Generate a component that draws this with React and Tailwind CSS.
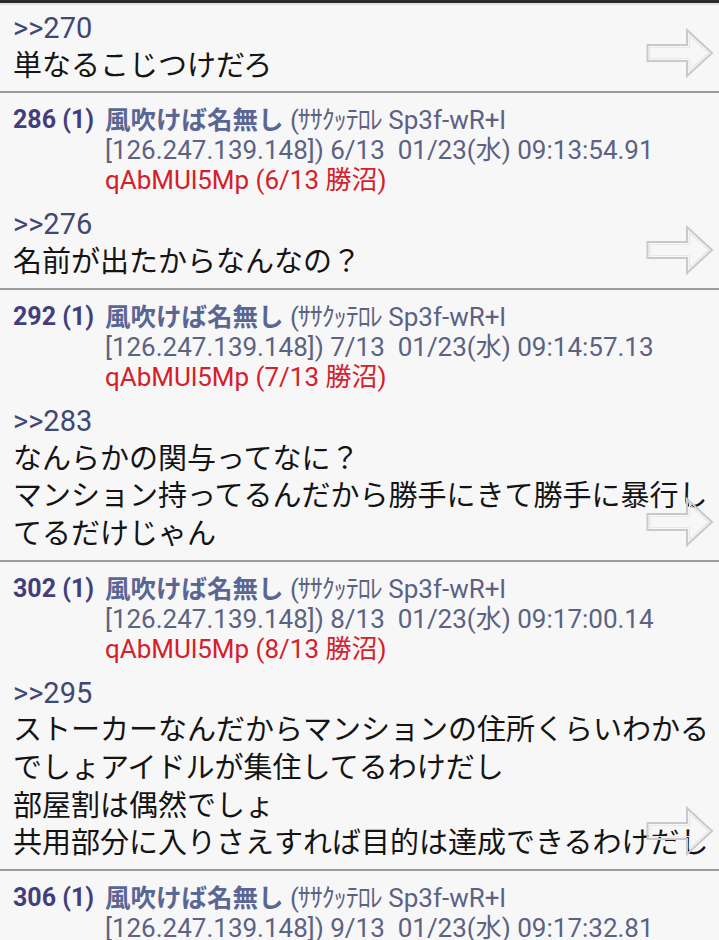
import React from 'react';

const posts = [
  {
    id: 286,
    date: '6/13  01/23(水) 09:13:54.91',
    count: '6/13',
    anchor: '>>276',
    lines: ['名前が出たからなんなの？'],
  },
  {
    id: 292,
    date: '7/13  01/23(水) 09:14:57.13',
    count: '7/13',
    anchor: '>>283',
    lines: ['なんらかの関与ってなに？', 'マンション持ってるんだから勝手にきて勝手に暴行し', 'てるだけじゃん'],
  },
  {
    id: 302,
    date: '8/13  01/23(水) 09:17:00.14',
    count: '8/13',
    anchor: '>>295',
    lines: [
      'ストーカーなんだからマンションの住所くらいわかる',
      'でしょアイドルが集住してるわけだし',
      '部屋割は偶然でしょ',
      '共用部分に入りさえすれば目的は達成できるわけだし',
    ],
  },
  {
    id: 306,
    date: '9/13  01/23(水) 09:17:32.81',
    count: '9/13',
    anchor: '>>298',
    lines: ['そういうこと'],
  },
];

const font = { fontFamily: 'Roboto, "Noto Sans CJK JP", sans-serif' };

function Arrow() {
  return (
    <svg width="68" height="50" viewBox="0 0 68 50" className="absolute right-[5px] bottom-[13px]">
      <polygon points="1.5,17 41,17 41,2 66,25 41,48 41,33 1.5,33" fill="none" stroke="#c9c9c9" strokeWidth="2" />
      <polygon points="4,19.5 43.5,19.5 43.5,7.5 62.5,25 43.5,42.5 43.5,30.5 4,30.5" fill="none" stroke="#e9e9e9" strokeWidth="1.2" />
    </svg>
  );
}

function Body({ anchor, lines }) {
  return (
    <div className="pl-[13px] pr-[4px] text-[29px] leading-[37.7px]">
      <div className="text-[#3f4775]">{anchor}</div>
      {lines.map((l, i) => (
        <div key={i} className="text-[#141414] whitespace-nowrap">{l}</div>
      ))}
    </div>
  );
}

function Post({ post }) {
  return (
    <div className="relative border-b-2 border-[#9c9c9c] pt-[12px] pb-[6px]">
      <div className="flex pl-[13px] text-[26px] leading-[30px]">
        <div className="w-[92px] shrink-0 font-bold text-[25px] text-[#423e7e]">
          {post.id} (1)
        </div>
        <div className="flex flex-col">
          <div className="whitespace-nowrap">
            <span className="font-bold text-[25.5px] text-[#5a6694]">風吹けば名無し</span>
            <span className="text-[#5c6282]"> <span className="tracking-[-1px]">(ｻｻｸｯﾃﾛﾚ</span> Sp3f-wR+l</span>
          </div>
          <div className="text-[#5c6282] whitespace-pre">[126.247.139.148]) {post.date}</div>
          <div className="text-[#d5202a]">qAbMUl5Mp ({post.count} 勝沼)</div>
        </div>
      </div>
      <div className="mt-[11px]">
        <Body anchor={post.anchor} lines={post.lines} />
      </div>
      <Arrow />
    </div>
  );
}

export default function App() {
  return (
    <div className="w-[719px] h-[940px] overflow-hidden bg-[#f7f7f7]" style={font}>
      <div className="h-[3px] bg-[#2b2b2b]" />
      <div className="h-[2px] bg-[#e2e2e2]" />
      <div className="relative border-b-2 border-[#9c9c9c] pt-[5px] pb-[6px]">
        <Body anchor=">>270" lines={['単なるこじつけだろ']} />
        <Arrow />
      </div>
      {posts.map((p) => (
        <Post key={p.id} post={p} />
      ))}
    </div>
  );
}
